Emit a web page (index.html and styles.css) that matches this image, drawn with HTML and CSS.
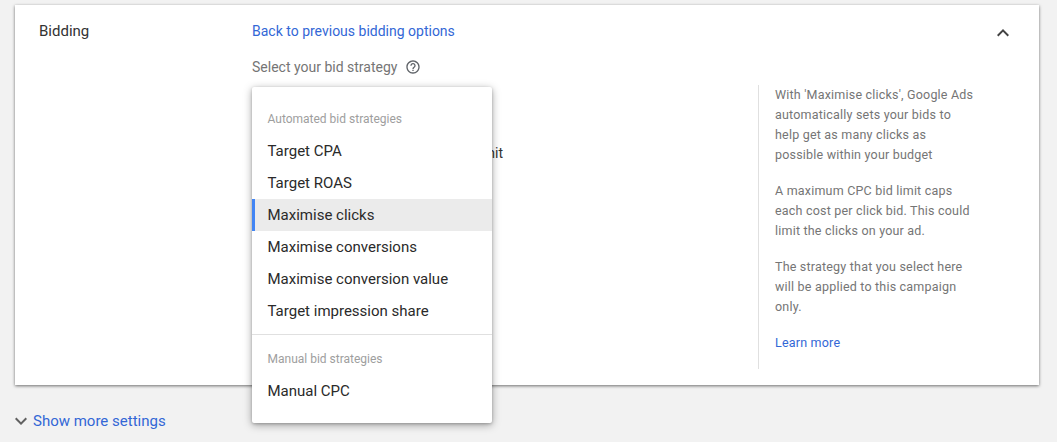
FILE: index.html
```html
<!DOCTYPE html>
<html lang="en">
<head>
<meta charset="utf-8">
<title>Bidding</title>
<link rel="stylesheet" href="styles.css">
</head>
<body>
<main class="page">
  <section class="card">
    <h2 class="label">Bidding</h2>
    <div class="main">
      <a class="link back" href="#">Back to previous bidding options</a>
      <div class="select-row">
        <span>Select your bid strategy</span>
        <svg class="help" viewBox="0 0 24 24" width="16" height="16" aria-hidden="true"><path d="M11 18h2v-2h-2v2zm1-16C6.48 2 2 6.48 2 12s4.48 10 10 10 10-4.48 10-10S17.52 2 12 2zm0 18c-4.41 0-8-3.59-8-8s3.59-8 8-8 8 3.59 8 8-3.59 8-8 8zm0-14c-2.21 0-4 1.79-4 4h2c0-1.1.9-2 2-2s2 .9 2 2c0 2-3 1.75-3 5h2c0-2.25 3-2.5 3-5 0-2.21-1.79-4-4-4z"/></svg>
      </div>
      <div class="behind">
        <p class="limit">limit</p>
      </div>
      <div class="menu">
        <div class="group-title first">Automated bid strategies</div>
        <div class="item">Target CPA</div>
        <div class="item">Target ROAS</div>
        <div class="item selected">Maximise clicks</div>
        <div class="item">Maximise conversions</div>
        <div class="item">Maximise conversion value</div>
        <div class="item">Target impression share</div>
        <div class="divider"></div>
        <div class="group-title">Manual bid strategies</div>
        <div class="item">Manual CPC</div>
      </div>
    </div>
    <aside class="side">
      <p>With 'Maximise clicks', Google Ads automatically sets your bids to help get as many clicks as possible within your budget</p>
      <p>A maximum CPC bid limit caps each cost per click bid. This could limit the clicks on your ad.</p>
      <p>The strategy that you select here will be applied to this campaign only.</p>
      <a class="link small" href="#">Learn more</a>
    </aside>
    <button class="collapse" type="button" aria-label="Collapse">
      <svg viewBox="0 0 24 24" width="24" height="24" aria-hidden="true"><path d="M7.41 15.41 12 10.83l4.59 4.58L18 14l-6-6-6 6z"/></svg>
    </button>
  </section>
  <div class="more">
    <svg viewBox="0 0 24 24" width="24" height="24" aria-hidden="true"><path d="M7.41 8.59 12 13.17l4.59-4.58L18 10l-6 6-6-6z"/></svg>
    <a class="link" href="#">Show more settings</a>
  </div>
</main>
</body>
</html>
```

FILE: styles.css
```css
* { box-sizing: border-box; }
html, body { margin: 0; height: 100%; overflow: hidden; }
body {
  background: #f2f2f2;
  font-family: Roboto, "Liberation Sans", sans-serif;
  font-size: 14px;
  color: #212121;
}
.page { padding: 5px 18px 0 15px; }
.card {
  position: relative;
  display: flex;
  height: 380px;
  background: #fff;
  box-shadow: 0 1px 3px rgba(0, 0, 0, .55);
}
.label {
  flex: 0 0 237px;
  margin: 0;
  padding: 17px 0 0 24px;
  font-size: 15px;
  font-weight: 400;
  line-height: 18px;
  color: #333;
}
.main { flex: 0 0 506px; padding-top: 17px; position: relative; }
.link { color: #3367d6; text-decoration: none; }
.back { display: block; line-height: 18px; }
.select-row {
  display: flex;
  align-items: center;
  gap: 8px;
  margin-top: 18px;
  height: 18px;
  color: #757575;
}
.help { fill: #5f6368; }
.behind { padding: 68px 0 0 224px; }
.limit { margin: 0; line-height: 18px; color: #333; white-space: nowrap; }
.menu {
  position: absolute;
  left: 0;
  top: 82px;
  width: 240px;
  height: 336px;
  padding-top: 16px;
  background: #fff;
  border-radius: 2px;
  box-shadow: 0 2px 8px rgba(0, 0, 0, .35), 0 1px 3px rgba(0, 0, 0, .2);
  z-index: 2;
}
.group-title {
  height: 32px;
  padding: 0 15.5px;
  font-size: 12px;
  line-height: 32px;
  color: #9e9e9e;
}
.item {
  height: 32px;
  padding: 0 15.5px;
  font-size: 15px;
  line-height: 32px;
  color: #2a2a2a;
}
.selected {
  background: #ebebeb;
  border-left: 3px solid #4285f4;
  padding-left: 12.5px;
}
.divider { height: 1px; margin-top: 7px; background: #e0e0e0; margin-bottom: 8px; }
.side {
  flex: 0 0 220px;
  align-self: flex-start;
  margin-top: 80px;
  padding: 0 3px 16px 16px;
  border-left: 1px solid #e0e0e0;
  font-size: 12.5px;
  line-height: 20px;
  color: #757575;
  letter-spacing: .2px;
}
.side p { margin: 0 0 16px; }
.small { display: block; font-size: 12.5px; line-height: 20px; }
.collapse {
  position: absolute;
  right: 24px;
  top: 16px;
  width: 24px;
  height: 24px;
  padding: 0;
  border: 0;
  background: none;
}
.collapse svg { fill: #424242; display: block; }
.more {
  display: flex;
  align-items: center;
  margin-top: 24px;
  margin-left: -6px;
  height: 24px;
}
.more svg { fill: #616161; }
.more .link { font-size: 15px; }
```
